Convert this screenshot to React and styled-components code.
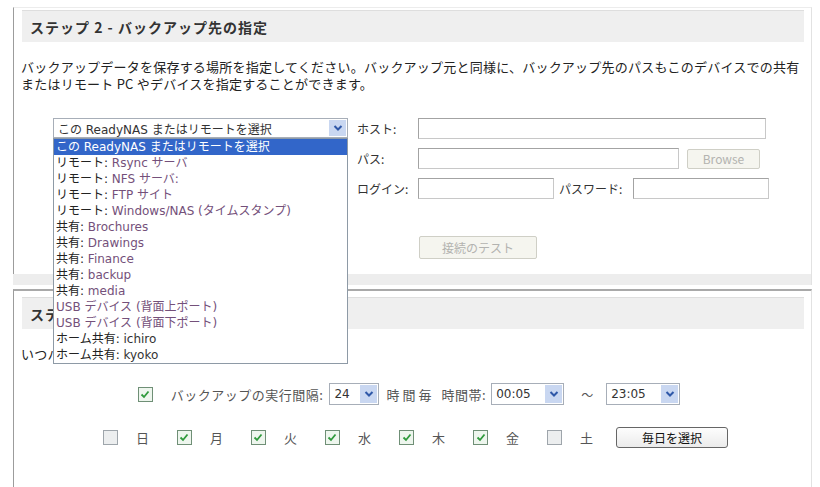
import React from 'react'
import styled, { createGlobalStyle } from 'styled-components'

const GlobalStyle = createGlobalStyle`
  body {
    margin: 0;
    background: #fff;
    font-family: "DejaVu Sans", "Noto Sans CJK JP", sans-serif;
    color: #222;
  }
`

const jp = `"Noto Sans CJK JP", "DejaVu Sans", sans-serif`

// 宛先リスト (prefix は黒、名前は紫っぽい色)
const destinations = [
    { head: 'リモート: ', name: 'Rsync サーバ' },
    { head: 'リモート: ', name: 'NFS サーバ:' },
    { head: 'リモート: ', name: 'FTP サイト' },
    { head: 'リモート: ', name: 'Windows/NAS (タイムスタンプ)' },
    { head: '共有: ', name: 'Brochures' },
    { head: '共有: ', name: 'Drawings' },
    { head: '共有: ', name: 'Finance' },
    { head: '共有: ', name: 'backup' },
    { head: '共有: ', name: 'media' },
    { head: '', name: 'USB デバイス (背面上ポート)' },
    { head: '', name: 'USB デバイス (背面下ポート)' },
    { head: 'ホーム共有: ', name: 'ichiro', plain: true },
    { head: 'ホーム共有: ', name: 'kyoko', plain: true },
]

const days = [
    { label: '日', on: false },
    { label: '月', on: true },
    { label: '火', on: true },
    { label: '水', on: true },
    { label: '木', on: true },
    { label: '金', on: true },
    { label: '土', on: false },
]

const Chevron = () => (
    <svg width="10" height="8" viewBox="0 0 10 8">
        <path d="M1.5 2 L5 5.5 L8.5 2" stroke="#2f58a8" strokeWidth="2" fill="none" />
    </svg>
)

const Check = ({ on }) => (
    <CheckBox on={on}>
        {on && (
            <svg width="10" height="9" viewBox="0 0 10 9">
                <path d="M1.5 4.5 L4 7 L8.5 1.5" stroke="#2f9a3c" strokeWidth="1.8" fill="none" />
            </svg>
        )}
    </CheckBox>
)

const Select = ({ width, height, children }) => (
    <SelectBox width={width} height={height}>
        <SelectValue>{children}</SelectValue>
        <SelectArrow><Chevron /></SelectArrow>
    </SelectBox>
)

const App = () => {
    return (
        <>
            <GlobalStyle />
            <Page>
                <Panel>
                    <PanelHeader>ステップ 2 - バックアップ先の指定</PanelHeader>
                    <Intro>
                        バックアップデータを保存する場所を指定してください。バックアップ元と同様に、バックアップ先のパスもこのデバイスでの共有<br />
                        またはリモート PC やデバイスを指定することができます。
                    </Intro>

                    <FormArea>
                        <SourcePicker>
                            <Select width={295} height={20}>この ReadyNAS またはリモートを選択</Select>
                            <OptionList>
                                <OptionRow selected>この ReadyNAS またはリモートを選択</OptionRow>
                                {destinations.map((d, i) => (
                                    <OptionRow key={i}>
                                        {d.head}<OptionName plain={d.plain}>{d.name}</OptionName>
                                    </OptionRow>
                                ))}
                            </OptionList>
                        </SourcePicker>

                        <RemoteForm>
                            <FormRow>
                                <Label>ホスト:</Label>
                                <TextInput width={348} />
                            </FormRow>
                            <FormRow>
                                <Label>パス:</Label>
                                <TextInput width={261} />
                                <GhostButton width={73}>Browse</GhostButton>
                            </FormRow>
                            <FormRow>
                                <Label>ログイン:</Label>
                                <TextInput width={136} />
                                <InlineLabel>パスワード:</InlineLabel>
                                <TextInput width={136} />
                            </FormRow>
                            <TestRow>
                                <GhostButton width={118} tall>接続のテスト</GhostButton>
                            </TestRow>
                        </RemoteForm>
                    </FormArea>
                </Panel>
                <PanelFoot />

                <Panel second>
                    <PanelHeader>ステップ 3 - スケジュールの選択</PanelHeader>
                    <Intro>いつバックアップを実行するかを指定してください。</Intro>

                    <ScheduleRow>
                        <Check on />
                        <RowText gap={18}>バックアップの実行間隔:</RowText>
                        <Spacer w={6} />
                        <Select width={50} height={22}>24</Select>
                        <RowText gap={7} wide>時間毎</RowText>
                        <RowText gap={7}>時間帯:</RowText>
                        <Spacer w={5} />
                        <Select width={73} height={22}>00:05</Select>
                        <Tilde>～</Tilde>
                        <Select width={74} height={22}>23:05</Select>
                    </ScheduleRow>

                    <DaysRow>
                        {days.map(d => (
                            <Day key={d.label}>
                                <Check on={d.on} />
                                <DayLabel>{d.label}</DayLabel>
                            </Day>
                        ))}
                        <PlainButton>毎日を選択</PlainButton>
                    </DaysRow>
                </Panel>
            </Page>
        </>
    )
}

const Page = styled.div`
   width: 799px;
   padding: 7px 0 0 13px;
`

const Panel = styled.section`
   position: relative;
   z-index: ${p => p.second ? 0 : 1};
   border-left: 1px solid #9c9c9c;
   border-right: 1px solid #e2e2e2;
   border-top: ${p => p.second ? '2px solid #a9a9a9' : '1px solid #ececec'};
   padding: ${p => p.second ? '6px 7px 0 8px' : '2px 7px 15px 8px'};
   height: ${p => p.second ? '190px' : 'auto'};
`

const PanelFoot = styled.div`
   height: 11px;
   margin-bottom: 4px;
   background: #ededed;
   border-right: 1px solid #e2e2e2;
`

const PanelHeader = styled.h2`
   margin: 0;
   height: 31px;
   display: flex;
   align-items: center;
   padding-left: 8px;
   background: #efefef;
   border-top: 1px solid #dedede;
   font-family: ${jp};
   font-size: 14px;
   font-weight: bold;
   letter-spacing: 1px;
   color: #333;
`

const Intro = styled.p`
   margin: 16px 0 0 -1px;
   font-family: ${jp};
   font-size: 13px;
   letter-spacing: 0.22px;
   line-height: 17px;
   color: #222;
   white-space: nowrap;
`

const FormArea = styled.div`
   display: flex;
   align-items: flex-start;
   margin-top: 26px;
   padding-left: 31px;
`

const SourcePicker = styled.div`
   position: relative;
   width: 295px;
   margin-right: 9px;
`

const SelectBox = styled.div`
   display: flex;
   align-items: stretch;
   box-sizing: border-box;
   width: ${p => p.width}px;
   height: ${p => p.height}px;
   border: 1px solid #a7aeb8;
   background: #fff;
`

const SelectValue = styled.span`
   flex: 1;
   display: flex;
   align-items: center;
   padding-left: 4px;
   font-size: 12px;
   color: #333;
   white-space: nowrap;
   overflow: hidden;
`

const SelectArrow = styled.span`
   width: 17px;
   margin: 1px;
   display: flex;
   align-items: center;
   justify-content: center;
   background: #c9d7f1;
`

const OptionList = styled.ul`
   position: absolute;
   top: 100%;
   left: 0;
   z-index: 5;
   box-sizing: border-box;
   width: 295px;
   margin: 0;
   padding: 0;
   list-style: none;
   background: #fff;
   border: 1px solid #8e9aa6;
`

const OptionRow = styled.li`
   height: 16px;
   line-height: 16px;
   padding-left: 2px;
   font-size: 12px;
   white-space: nowrap;
   color: ${p => p.selected ? '#fff' : '#222'};
   background: ${p => p.selected ? '#3266c9' : 'transparent'};
`

const OptionName = styled.span`
   color: ${p => p.plain ? '#333' : '#74507a'};
`

const RemoteForm = styled.div`
   display: flex;
   flex-direction: column;
   gap: 9px;
`

const FormRow = styled.div`
   display: flex;
   align-items: center;
   height: 21px;
`

const Label = styled.span`
   width: 61px;
   font-family: ${jp};
   font-size: 12px;
   color: #333;
`

const InlineLabel = styled.span`
   width: 79px;
   padding-left: 5px;
   box-sizing: border-box;
   font-family: ${jp};
   font-size: 12px;
   color: #333;
`

const TextInput = styled.div`
   box-sizing: border-box;
   width: ${p => p.width}px;
   height: 21px;
   border: 1px solid #a3a3a3;
   border-bottom-color: #c8c8c8;
   border-right-color: #c8c8c8;
   background: #fff;
`

const GhostButton = styled.div`
   box-sizing: border-box;
   width: ${p => p.width}px;
   height: ${p => p.tall ? 23 : 20}px;
   margin-left: ${p => p.tall ? 1 : 8}px;
   display: flex;
   align-items: center;
   justify-content: center;
   border: 1px solid #cfcfc6;
   border-radius: 2px;
   background: #f5f5ef;
   font-family: ${jp};
   font-size: 12px;
   color: #b3b3b0;
`

const TestRow = styled.div`
   margin-top: 28px;
   margin-left: 61px;
`

const ScheduleRow = styled.div`
   display: flex;
   align-items: center;
   justify-content: center;
   margin-top: 21px;
   height: 22px;
   padding-right: 8px;
`

const RowText = styled.span`
   margin-left: ${p => p.gap}px;
   font-family: ${jp};
   font-size: 13px;
   letter-spacing: ${p => p.wide ? '3px' : '0.5px'};
   color: #555;
`

const Spacer = styled.span`
   width: ${p => p.w}px;
`

const Tilde = styled.span`
   margin: 0 13px 0 17px;
   font-family: ${jp};
   font-size: 12px;
   color: #555;
`

const DaysRow = styled.div`
   display: flex;
   align-items: center;
   justify-content: center;
   margin-top: 21px;
   height: 22px;
   padding-left: 5px;
`

const Day = styled.div`
   display: flex;
   align-items: center;
   margin-right: 28px;
`

const DayLabel = styled.span`
   margin-left: 18px;
   font-family: ${jp};
   font-size: 13px;
   color: #555;
`

const CheckBox = styled.span`
   box-sizing: border-box;
   width: 15px;
   height: 15px;
   display: inline-flex;
   align-items: center;
   justify-content: center;
   border: 1px solid ${p => p.on ? '#6f8f76' : '#9ea5ab'};
   background: ${p => p.on ? '#eef6ee' : '#eceeef'};
`

const PlainButton = styled.div`
   box-sizing: border-box;
   width: 112px;
   height: 21px;
   margin-left: -5px;
   display: flex;
   align-items: center;
   justify-content: center;
   border: 1px solid #666;
   border-radius: 3px;
   background: linear-gradient(#fdfdfd, #ebebeb);
   font-family: ${jp};
   font-size: 12px;
   color: #111;
`

export default App
